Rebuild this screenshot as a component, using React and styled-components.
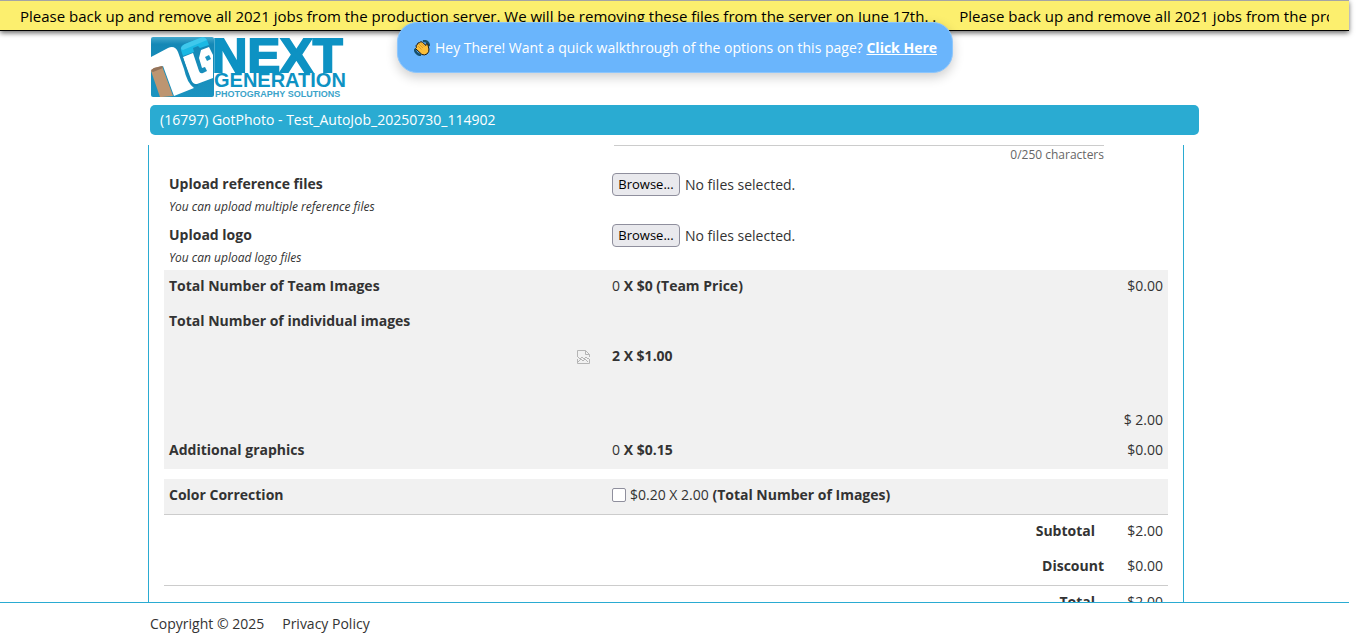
import React from "react";
import styled, { createGlobalStyle } from "styled-components";

const Global = createGlobalStyle`
  * { box-sizing: border-box; }
  body { margin: 0; background: #fff; color: #333; font: 14px/22px "Open Sans", sans-serif; }
  button, input { font: inherit; }
`;

const Page = styled.div`
  display: flex;
  flex-direction: column;
  height: 100vh;
  margin-right: 17px;
`;

const Notice = styled.div`
  height: 31px;
  flex: none;
  padding: 0 20px;
  background: #fcef6e;
  border-top: 1px solid #a5a5a5;
  border-bottom: 1px solid #000;
  box-shadow: 0 2px 5px rgba(0, 0, 0, 0.6);
`;

const NoticeTrack = styled.div`
  display: flex;
  gap: 23px;
  overflow: hidden;
  white-space: nowrap;
  color: #000;
  font-size: 15px;
  line-height: 30px;
  height: 29px;
`;

const Container = styled.div`
  width: 100%;
  max-width: 1049px;
  margin: 0 auto;
`;

const Main = styled(Container)`
  display: flex;
  flex-direction: column;
  flex: 1;
  min-height: 0;
`;

const Header = styled.header`
  flex: none;
  padding: 5px 0 7px;
  height: 74px;
`;

const Walkthrough = styled.div`
  position: absolute;
  top: 22px;
  left: calc(50% - 8px);
  transform: translateX(-50%);
  display: flex;
  align-items: center;
  gap: 5px;
  height: 51px;
  padding: 0 15px 0 16px;
  border: 1px solid #8cc6fd;
  border-radius: 20px;
  background: #6ab5fc;
  color: #fff;
  white-space: nowrap;
  box-shadow: 0 4px 12px rgba(0, 0, 0, 0.2);
  a { color: #fff; font-weight: 700; }
`;

const JobTitle = styled.h1`
  flex: none;
  margin: 0;
  padding: 4px 10px;
  border-radius: 5px;
  background: #2aabd2;
  color: #fff;
  font-size: 14px;
  font-weight: 400;
  line-height: 22px;
`;

const Panel = styled.main`
  flex: 1;
  min-height: 0;
  overflow: hidden;
  margin: 10px 15px 0 -2px;
  padding: 0 15px;
  border: solid #2aabd2;
  border-width: 0 1px;
`;

const Counter = styled.div`
  margin: 0 64px 9px 450px;
  border-top: 1px solid #ccc;
  color: #666;
  font-size: 12px;
  line-height: 18px;
  text-align: right;
`;

const UploadRow = styled.div`
  display: grid;
  grid-template-columns: 443px 1fr;
  padding: 0 5px;
  height: ${(p) => (p.$last ? 46 : 51)}px;
`;

const Strong = styled.label`
  display: block;
  font-weight: 700;
`;

const Hint = styled.div`
  font-size: 12px;
  font-style: italic;
  line-height: 24px;
`;

const FilePicker = styled.div`
  display: flex;
  align-items: center;
  gap: 5px;
  height: 23px;
`;

const Browse = styled.button`
  height: 23px;
  width: 68px;
  padding: 0;
  border: 1px solid #8f8f9d;
  border-radius: 4px;
  background: #e9e9ed;
  color: #000;
  font-size: 13px;
  line-height: 21px;
`;

const Charges = styled.table`
  width: 100%;
  margin-top: ${(p) => p.$gap || 0}px;
  border-collapse: collapse;
  table-layout: fixed;
  background: ${(p) => (p.$shaded ? "#f1f1f1" : "transparent")};
`;

const Row = styled.tr`
  height: ${(p) => p.$height || 35}px;
  border-bottom: ${(p) => (p.$ruled ? "1px solid #ccc" : "0")};
`;

const Cell = styled.td`
  padding: 5px 5px 0;
  vertical-align: top;
`;

const Name = styled.th`
  padding: 5px 5px 0;
  vertical-align: top;
  text-align: left;
  font-weight: 700;
`;

const Amount = styled(Cell)`
  text-align: right;
  white-space: nowrap;
`;

const LineTotal = styled(Amount)`
  padding: 0 5px 3px;
  vertical-align: bottom;
`;

const IconCell = styled(Cell)`
  padding: 10px 17px 0;
  text-align: right;
  line-height: 0;
`;

const TotalName = styled(Name)`
  padding-right: ${(p) => (p.$inset ? 9 : 0)}px;
  text-align: right;
`;

const Bold = styled.span`
  font-weight: 700;
`;

const Option = styled.label`
  display: flex;
  align-items: center;
  gap: 4px;
  white-space: pre;
`;

const Tick = styled.input`
  appearance: none;
  width: 14px;
  height: 14px;
  margin: 0;
  border: 1px solid #8f8f9d;
  border-radius: 2px;
  background: #fff;
`;

const Footer = styled.footer`
  flex: none;
  height: 41px;
  padding-top: 10px;
  border-top: 1px solid #2aabd2;
`;

const FooterLinks = styled(Container)`
  display: flex;
  gap: 18px;
  a { color: inherit; text-decoration: none; }
`;

const Logo = () => (
  <svg width="196" height="62" viewBox="0 0 196 62" role="img" aria-label="Next Generation Photography Solutions">
    <defs>
      <linearGradient id="mark" x1="0" y1="0" x2="0" y2="1">
        <stop offset="0" stopColor="#45a9cd" />
        <stop offset="0.12" stopColor="#1488b6" />
        <stop offset="1" stopColor="#1a93c0" />
      </linearGradient>
    </defs>
    <rect x="1" y="1" width="63" height="60" rx="2" fill="url(#mark)" />
    <path d="M1 24 L1 21 L18 12 Q25 9 28 16 L34 33 Q37 47 44 52 L24 60 L13 30 L1 35 Z" fill="#fff" />
    <path d="M1 35 Q2 33 4 32 L12 30 L23 60 L12 61 H10 Z" fill="#bd9571" />
    <path d="M1 35 Q2 33 4 32 L12 30 L13 32 L3 36 Z" fill="#94735a" />
    <path d="M31 14 Q30 10 35 8 L50 2 Q55 0 57 4 L59 9 L50 12 L48 10 L43 12 L44 16 L33 20 Z" fill="#1ab9e4" />
    <path d="M31 13 Q31 10 35 8 L50 2 Q55 0 57 4 L33 14 Z" fill="#3fc8ec" />
    <path d="M33 21 L43 17 L49 35 Q50 38 53 37 L57 35 L55 31 L52 32 L49 22 L51 14 L59 11 L63 19 V42 L47 48 Q42 49 40 43 Z" fill="#fff" />
    <path d="M55 21 L59 19 L61 23 L57 25 Z" fill="#1a93c0" />
    <path d="M31 19 L41 46 Q43 50 48 49" fill="none" stroke="#1488b6" strokeWidth="2" />
    <g fill="#0d92c3" fontFamily="Liberation Sans, Arial, sans-serif" fontWeight="700">
      <text x="62" y="36" fontSize="49" stroke="#0d92c3" strokeWidth="2">NEXT</text>
      <text x="64" y="51" fontSize="20">GENERATION</text>
      <text x="65" y="61" fontSize="9" fill="#3ba3c9">PHOTOGRAPHY SOLUTIONS</text>
    </g>
  </svg>
);

const Wave = () => (
  <svg width="16" height="16" viewBox="0 0 16 16" aria-hidden="true">
    <path d="M10 1 Q14 1 15 5 M1 10 Q2 14 6 15" fill="none" stroke="#17506b" strokeWidth="2.4" strokeLinecap="round" />
    <path d="M2 5.5 L3.5 4.5 L4 3 L5.8 2.6 L7 1.6 L8.6 2.4 L12 5.5 L12.3 3.6 L13.7 4 L15 9 Q15.4 12 13 14 Q10.500 15.600 8 14.500 L1.500 8.500 L2.500 7.500 Z" fill="#fcbf3a" stroke="#1a1a1a" strokeWidth="1" strokeLinejoin="round" />
    <path d="M3.500 5.500 L7.500 9.500 M5 4 L9 8 M7 3.200 L10.500 6.800" stroke="#c98a1c" strokeWidth="0.7" />
  </svg>
);

const BrokenImage = () => (
  <svg width="13" height="14" viewBox="0 0 13 14" fill="none" stroke="#b5b5b5" role="img" aria-label="Image">
    <path d="M.5 7V.5H8.5L12.5 4.5V7M8.5.5V4.5H12.5M.5 9V13.5H12.5V9" />
    <path d="M1 7L3 9L5 7L7 9L9 7L11 9L12 8M1 12L4 9L6 11L8 9L11 12" />
  </svg>
);

const message =
  "Please back up and remove all 2021 jobs from the production server. We will be removing these files from the server on June 17th. .";

const uploads = [
  { id: "reference", label: "Upload reference files", hint: "You can upload multiple reference files" },
  { id: "logo", label: "Upload logo", hint: "You can upload logo files" },
];

const Columns = () => (
  <colgroup>
    <col style={{ width: 443 }} />
    <col />
    <col style={{ width: 64 }} />
  </colgroup>
);

export default function App() {
  return (
    <Page>
      <Global />
      <Notice>
        <NoticeTrack>
          <span>{message}</span>
          <span>{message}</span>
        </NoticeTrack>
      </Notice>
      <Walkthrough>
        <Wave />
        <span>
          Hey There! Want a quick walkthrough of the options on this page? <a href="#walkthrough">Click Here</a>
        </span>
      </Walkthrough>
      <Main as="div">
        <Header><Logo /></Header>
        <JobTitle>(16797) GotPhoto - Test_AutoJob_20250730_114902</JobTitle>
        <Panel>
          <Counter>0/250 characters</Counter>
          {uploads.map((u, i) => (
            <UploadRow key={u.id} $last={i === uploads.length - 1}>
              <div>
                <Strong htmlFor={u.id}>{u.label}</Strong>
                <Hint>{u.hint}</Hint>
              </div>
              <FilePicker>
                <Browse type="button" id={u.id}>Browse...</Browse>
                <span>No files selected.</span>
              </FilePicker>
            </UploadRow>
          ))}
          <Charges $shaded>
            <Columns />
            <tbody>
              <Row>
                <Name scope="row">Total Number of Team Images</Name>
                <Cell>0 <Bold>X $0 (Team Price)</Bold></Cell>
                <Amount>$0.00</Amount>
              </Row>
              <Row><Name scope="row" colSpan={3}>Total Number of individual images</Name></Row>
              <Row>
                <IconCell><BrokenImage /></IconCell>
                <Cell colSpan={2}><Bold>2 X $1.00</Bold></Cell>
              </Row>
              <Row $height={59}><LineTotal colSpan={3}>$ 2.00</LineTotal></Row>
              <Row>
                <Name scope="row">Additional graphics</Name>
                <Cell>0 <Bold>X $0.15</Bold></Cell>
                <Amount>$0.00</Amount>
              </Row>
            </tbody>
          </Charges>
          <Charges $shaded $gap={10}>
            <Columns />
            <tbody>
              <Row $ruled>
                <Name scope="row">Color Correction</Name>
                <Cell colSpan={2}>
                  <Option>
                    <Tick type="checkbox" />
                    <span>$0.20 X 2.00 <Bold>(Total Number of Images)</Bold></span>
                  </Option>
                </Cell>
              </Row>
            </tbody>
          </Charges>
          <Charges>
            <Columns />
            <tbody>
              <Row><TotalName scope="row" colSpan={2} $inset>Subtotal</TotalName><Amount>$2.00</Amount></Row>
              <Row $ruled $height={36}><TotalName scope="row" colSpan={2}>Discount</TotalName><Amount>$0.00</Amount></Row>
              <Row><TotalName scope="row" colSpan={2} $inset>Total</TotalName><Amount>$2.00</Amount></Row>
            </tbody>
          </Charges>
        </Panel>
      </Main>
      <Footer>
        <FooterLinks>
          <span>Copyright © 2025</span>
          <a href="#privacy">Privacy Policy</a>
        </FooterLinks>
      </Footer>
    </Page>
  );
}
